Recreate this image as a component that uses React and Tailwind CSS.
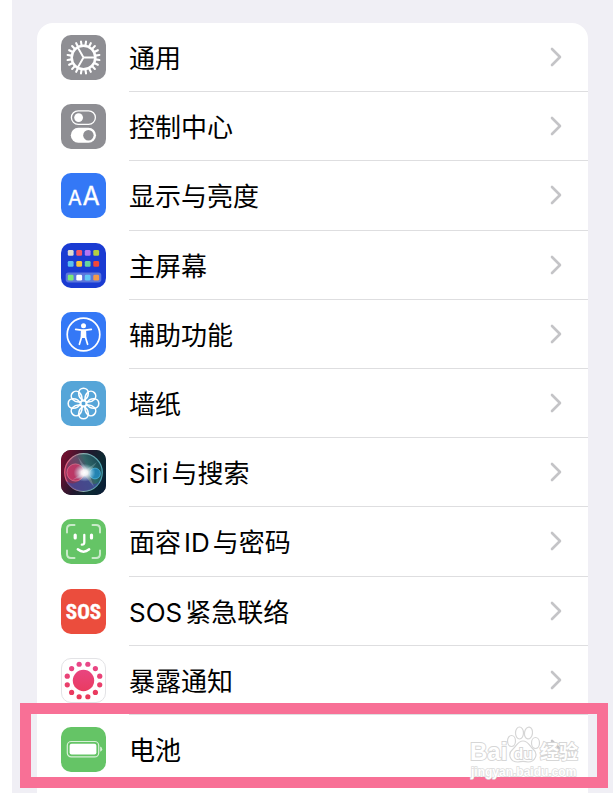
import React from 'react';

const GearIcon = () => (
  <svg viewBox="0 0 45 45" className="size-full" fill="none" stroke="#fff">
    <circle cx="22.5" cy="22.5" r="11.8" strokeWidth="2.5" />
    {Array.from({ length: 20 }, (_, i) => (
      <path key={i} d="M22.5 6.4v4" strokeWidth="2.1" strokeLinecap="round" transform={`rotate(${i * 18 + 9} 22.5 22.5)`} />
    ))}
    <path d="M22.5 22.5H34.5M22.5 22.5L16.5 12M22.5 22.5L16.5 33" strokeWidth="1.9" />
  </svg>
);

const ControlIcon = () => (
  <svg viewBox="0 0 45 45" className="size-full">
    <rect x="10.4" y="6.8" width="24" height="13.6" rx="6.8" fill="none" stroke="#fff" strokeWidth="1.3" />
    <circle cx="17.6" cy="13.6" r="4.4" fill="#fff" />
    <rect x="9.8" y="23.8" width="25.2" height="15" rx="7.5" fill="#fff" />
    <circle cx="27.4" cy="31.3" r="5.2" fill="#8e8e93" />
  </svg>
);

const DisplayIcon = () => (
  <svg viewBox="0 0 45 45" className="size-full" fill="#fff" stroke="#fff" strokeWidth="0.3" fontFamily="Inter, sans-serif" fontWeight="400">
    <text x="14" y="32" fontSize="20" textAnchor="middle">A</text>
    <text x="30" y="32" fontSize="25" textAnchor="middle">A</text>
  </svg>
);

const TILE_COLORS = [
  '#dedbd0', '#f55766', '#b376f5', '#b3cf43',
  '#5abef0', '#fbc43c', '#66d3a0', '#f24738',
  '#7ce878', '#ffffff', '#60c7f5', '#f49a4a',
];

const HomeIcon = () => (
  <svg viewBox="0 0 45 45" className="size-full">
    <rect x="4.7" y="29.6" width="35.6" height="9.8" rx="2.8" fill="#5b76dc" />
    {TILE_COLORS.map((color, i) => (
      <rect key={i} x={6.8 + (i % 4) * 8.5} y={[7, 18, 31.8][Math.floor(i / 4)]} width="5.8" height="5.8" rx="1.3" fill={color} />
    ))}
  </svg>
);

const AccessibilityIcon = () => (
  <svg viewBox="0 0 45 45" className="size-full">
    <circle cx="22.5" cy="22.5" r="16.3" fill="none" stroke="#fff" strokeWidth="1.7" />
    <circle cx="22.5" cy="13.7" r="2.5" fill="#fff" />
    <path d="M14.7 17.3L20.6 18.2H24.4L30.3 17.3M22.5 19V25M20.7 18.4L20.6 25L18.4 32.3M24.3 18.4L24.4 25L26.6 32.3" fill="none" stroke="#fff" strokeWidth="1.7" strokeLinecap="round" strokeLinejoin="round" />
    <path d="M20 18H25L25.2 26H19.8Z" fill="#fff" />
  </svg>
);

const WallpaperIcon = () => (
  <svg viewBox="0 0 45 45" className="size-full" fill="none" stroke="#fff" strokeWidth="1.6">
    {Array.from({ length: 8 }, (_, i) => (
      <path key={i} d="M22.5 19.6C19.6 18.2 17.7 14.8 17.7 12A4.8 4.8 0 0 1 27.3 12C27.3 14.8 25.4 18.2 22.5 19.6Z" transform={`rotate(${i * 45} 22.5 22.5)`} />
    ))}
    <circle cx="22.5" cy="22.5" r="2.9" />
  </svg>
);

const SiriIcon = () => (
  <svg viewBox="0 0 45 45" className="size-full">
    <defs>
      <linearGradient id="siri-back" x1="0" y1="0.3" x2="1" y2="0.7">
        <stop offset="0" stopColor="#71102f" />
        <stop offset="0.45" stopColor="#22182e" />
        <stop offset="0.75" stopColor="#0d2932" />
        <stop offset="1" stopColor="#091f35" />
      </linearGradient>
      <linearGradient id="siri-orb" x1="0" y1="0.7" x2="1" y2="0.2">
        <stop offset="0" stopColor="#a83468" />
        <stop offset="0.48" stopColor="#755f80" />
        <stop offset="0.65" stopColor="#388781" />
        <stop offset="1" stopColor="#174b5d" />
      </linearGradient>
      <linearGradient id="siri-ring" x1="0" y1="0.5" x2="1" y2="0.5">
        <stop offset="0" stopColor="#e75779" />
        <stop offset="0.5" stopColor="#8aafb0" />
        <stop offset="1" stopColor="#4aa1af" />
      </linearGradient>
      <radialGradient id="siri-light">
        <stop offset="0" stopColor="#fff" />
        <stop offset="0.3" stopColor="#fff" stopOpacity="0.9" />
        <stop offset="1" stopColor="#b9eaff" stopOpacity="0" />
      </radialGradient>
    </defs>
    <rect width="45" height="45" fill="url(#siri-back)" />
    <circle cx="22.5" cy="22.5" r="18.8" fill="url(#siri-orb)" fillOpacity="0.7" stroke="url(#siri-ring)" strokeWidth="1.2" />
    <path d="M5 31C12 36 18 33 24 25C31 36 35 36 39 30C34 44 12 45 5 31Z" fill="#3a4a9c" opacity="0.7" />
    <circle cx="14.5" cy="22.5" r="8.6" fill="#d93769" fillOpacity="0.7" stroke="#f78199" strokeWidth="0.6" />
    <circle cx="34" cy="23.5" r="5.4" fill="#2490cc" fillOpacity="0.75" stroke="#56c4ed" strokeWidth="0.6" />
    <path d="M23 22L17 7L26 19L36 12L28 23L33 37L24 26L11 30Z" fill="#c9edf5" opacity="0.25" />
    <ellipse cx="23.5" cy="22.7" rx="11" ry="9" fill="url(#siri-light)" />
  </svg>
);

const FaceIcon = () => (
  <svg viewBox="0 0 45 45" className="size-full" fill="none" stroke="#fff" strokeLinecap="round" strokeLinejoin="round">
    <path d="M6 13.5V10Q6 6 10 6H13.5M31.5 6H35Q39 6 39 10V13.5M39 31.5V35Q39 39 35 39H31.5M13.5 39H10Q6 39 6 35V31.5" strokeWidth="2" opacity="0.65" />
    <path d="M14.2 16V19M30.5 16V19" strokeWidth="3.2" />
    <path d="M23.3 15.8V23.5Q23.3 25.8 20.8 25.7" strokeWidth="2.3" />
    <path d="M16.8 30.3Q22.5 35 28.2 30.3" strokeWidth="2.4" />
  </svg>
);

const SosIcon = () => (
  <svg viewBox="0 0 45 45" className="size-full" fill="#fff" stroke="#fff" strokeWidth="0.4">
    <text x="22.5" y="30" fontSize="21" fontWeight="bold" fontFamily="'Liberation Sans Narrow', 'Roboto Condensed', 'Open Sans Condensed', 'Noto Sans CJK SC', sans-serif" textAnchor="middle">SOS</text>
  </svg>
);

const ExposureIcon = () => (
  <svg viewBox="0 0 45 45" className="size-full">
    <defs>
      <linearGradient id="exposure" x1="0" y1="0" x2="0" y2="45" gradientUnits="userSpaceOnUse">
        <stop offset="0" stopColor="#e84a91" />
        <stop offset="1" stopColor="#ea3650" />
      </linearGradient>
    </defs>
    <circle cx="22.5" cy="22.5" r="10.7" fill="url(#exposure)" />
    {Array.from({ length: 12 }, (_, i) => {
      const a = ((i * 30 + 15) * Math.PI) / 180;
      return <circle key={i} cx={22.5 + 16.8 * Math.cos(a)} cy={22.5 + 16.8 * Math.sin(a)} r="2.6" fill="url(#exposure)" />;
    })}
  </svg>
);

const BatteryIcon = () => (
  <svg viewBox="0 0 45 45" className="size-full">
    <rect x="6.3" y="14.5" width="31.4" height="15.4" rx="4" fill="none" stroke="#fff" strokeWidth="1.2" opacity="0.75" />
    <rect x="8.6" y="16.8" width="26.8" height="10.8" rx="2" fill="#fff" />
    <path d="M39.2 19.6Q41.2 20.3 41.2 22.2T39.2 24.8Z" fill="#fff" opacity="0.75" />
  </svg>
);

const ITEMS = [
  { label: ['通用'], tile: 'bg-[#8e8e93]', Icon: GearIcon },
  { label: ['控制中心'], tile: 'bg-[#8e8e93]', Icon: ControlIcon },
  { label: ['显示与亮度'], tile: 'bg-[#3478f6]', Icon: DisplayIcon },
  { label: ['主屏幕'], tile: 'bg-[#1a3bd2]', Icon: HomeIcon },
  { label: ['辅助功能'], tile: 'bg-[#3478f6]', Icon: AccessibilityIcon },
  { label: ['墙纸'], tile: 'bg-[#56a5d8]', Icon: WallpaperIcon },
  { label: ['Siri', '与搜索'], tile: 'bg-[#22182e]', Icon: SiriIcon },
  { label: ['面容', 'ID', '与密码'], tile: 'bg-[#65c466]', Icon: FaceIcon },
  { label: ['SOS', '紧急联络'], tile: 'bg-[#eb4d3d]', Icon: SosIcon },
  { label: ['暴露通知'], tile: 'bg-white outline outline-1 -outline-offset-1 outline-[#e3e3e6]', Icon: ExposureIcon },
  { label: ['电池'], tile: 'bg-[#65c466]', Icon: BatteryIcon, marked: true },
];

const Watermark = () => (
  <svg viewBox="0 0 112 58" className="pointer-events-none absolute bottom-0 right-2 h-[58px] w-28" fill="#fff" stroke="#d6d6d6" strokeWidth="1.8" aria-hidden="true">
    <g fontFamily="'Liberation Sans', 'Noto Sans CJK SC', sans-serif" fontWeight="bold" style={{ paintOrder: 'stroke' }}>
      <text x="2" y="34" fontSize="24">Bai</text>
      <text x="72" y="33" fontSize="19">经验</text>
      <text x="3" y="50" fontSize="12" stroke="#dcdcdc" strokeWidth="1.4">jingyan.baidu.com</text>
    </g>
    <g strokeWidth="1.2">
      <ellipse cx="43.5" cy="15" rx="4" ry="5.5" />
      <ellipse cx="51.5" cy="7" rx="4" ry="6" />
      <ellipse cx="60.5" cy="7" rx="4" ry="6" transform="rotate(8 60.5 7)" />
      <ellipse cx="67.5" cy="17" rx="4" ry="5.5" />
      <path d="M55 15C60 15 61 19 65 23C71 28 67 36 60 36C56 35 54 35 50 36C42 36 39 28 45 23C49 19 50 15 55 15Z" />
    </g>
    <text x="46" y="33" fontSize="15" fontWeight="bold" fontFamily="'Liberation Sans', sans-serif" style={{ paintOrder: 'stroke' }}>du</text>
  </svg>
);

function SettingsRow({ label, tile, Icon, marked }) {
  return (
    <li className="relative flex flex-1">
      <button type="button" className="flex min-w-0 flex-1 items-stretch pl-6 text-left">
        <span className={`size-[45px] shrink-0 self-center overflow-hidden rounded-[10px] ${tile}`}>
          <Icon />
        </span>
        <span className={`ml-[23px] flex min-w-0 flex-1 items-center justify-between pr-6 ${marked ? '' : 'border-b border-[#dedee0]'}`}>
          <span className="flex gap-[3px] pt-1 text-[26px] leading-9 text-black">
            {label.map((part) => (
              <span key={part}>{part}</span>
            ))}
          </span>
          <svg viewBox="0 0 16 24" className="h-6 w-4 shrink-0" fill="none" stroke="#c4c4c7" strokeWidth="2.6" strokeLinecap="round" strokeLinejoin="round">
            <path d="M4 4L12 12L4 20" />
          </svg>
        </span>
      </button>
      {marked && (
        <>
          <div className="pointer-events-none absolute -bottom-1 -left-[17px] -right-5 -top-3 border-[11px] border-[#f87096]" />
          <Watermark />
        </>
      )}
    </li>
  );
}

export default function App() {
  return (
    <div className="min-h-screen overflow-hidden bg-white pl-3 font-['Inter','Noto_Sans_CJK_SC',sans-serif]">
      <main className="min-h-screen bg-[#f0eff5] pl-[25px] pr-[25px] pt-[23px]">
        <div className="rounded-t-2xl bg-white pb-[9px]">
          <ul className="flex min-h-[761px] flex-col">
            {ITEMS.map((item) => (
              <SettingsRow key={item.label.join('')} {...item} />
            ))}
          </ul>
        </div>
      </main>
    </div>
  );
}
